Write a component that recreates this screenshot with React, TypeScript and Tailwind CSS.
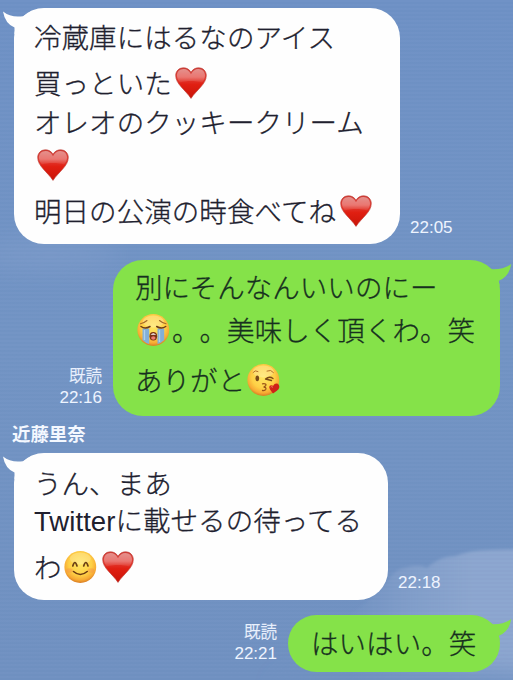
import type { ReactNode } from "react";

const fonts = "font-['Liberation_Sans','Noto_Sans_CJK_JP',sans-serif]";

function Heart() {
  return (
    <svg viewBox="0 0 37 34" className="mb-1 h-[34px] w-[37px] shrink-0">
      <defs>
        <linearGradient id="heart" x1="0" y1="0" x2="0" y2="1">
          <stop offset="0" stopColor="#d0403a" />
          <stop offset="0.3" stopColor="#e2423a" />
          <stop offset="0.55" stopColor="#e01f12" />
          <stop offset="1" stopColor="#c91408" />
        </linearGradient>
        <linearGradient id="heartShine" x1="0" y1="0" x2="0" y2="1">
          <stop offset="0" stopColor="#fff" stopOpacity="0.42" />
          <stop offset="0.6" stopColor="#fff" stopOpacity="0.28" />
          <stop offset="1" stopColor="#fff" stopOpacity="0.06" />
        </linearGradient>
      </defs>
      <path
        d="M19 6.2C21 3 23.5 1.8 26.5 1.8C31.200 1.8 34.3 5.2 34.3 9.6C34.3 18 25 23.5 19 32.4C13 23.5 3.7 18 3.7 9.6C3.7 5.2 6.8 1.8 11.5 1.8C14.5 1.8 17 3 19 6.2Z"
        fill="url(#heart)"
        stroke="#b92f27"
        strokeWidth="0.6"
      />
      <path
        d="M19 8.3C21 4.5 23.5 3 26.3 3C30.300 3 33 5.8 33 9.5C33 12 31.8 14.500 30 16.5C24 14.5 14 14.5 8 16.5C6.2 14.5 5 12 5 9.5C5 5.8 7.7 3 11.7 3C14.5 3 17 4.5 19 8.3Z"
        fill="url(#heartShine)"
      />
    </svg>
  );
}

function Face({ children }: { children: ReactNode }) {
  return (
    <svg viewBox="0 0 37 34" className="mb-1 h-[34px] w-[37px] shrink-0">
      <defs>
        <radialGradient id="face" cx="0.5" cy="0.4" r="0.6">
          <stop offset="0" stopColor="#ffe662" />
          <stop offset="0.6" stopColor="#fed046" />
          <stop offset="0.85" stopColor="#f7aa34" />
          <stop offset="1" stopColor="#d97d22" />
        </radialGradient>
      </defs>
      <circle cx="18.3" cy="17" r="15.9" fill="url(#face)" />
      <ellipse cx="18.3" cy="8.5" rx="10.5" ry="6" fill="#fff" opacity="0.22" />
      {children}
    </svg>
  );
}

function Crying() {
  return (
    <Face>
      <path d="M12 7.5Q9 10 5.5 10.8M24.5 7.5Q27.5 10 31 10.8" stroke="#a4682a" strokeWidth="1.1" fill="none" strokeLinecap="round" />
      <path d="M7.5 15.5H14.2V31Q10.5 30 7.5 27Z" fill="#82afd6" />
      <path d="M22.5 15.5H29.2V27Q26.2 30 22.5 31Z" fill="#82afd6" />
      <path d="M9.5 17V27M24.5 17V29" stroke="#add0ea" strokeWidth="1.3" />
      <path d="M6 13.5Q10 16.5 15 13.5M21.7 13.5Q26.5 16.5 30.7 13.5" stroke="#6d3c17" strokeWidth="1.5" fill="none" strokeLinecap="round" />
      <ellipse cx="18.3" cy="23.3" rx="3.8" ry="4.2" fill="#7a3314" />
      <path d="M15.5 21.8Q18.3 18.5 21.1 21.8Z" fill="#fff" />
      <ellipse cx="18.3" cy="25" rx="2.2" ry="1.7" fill="#ef7d72" />
    </Face>
  );
}

function Kiss() {
  return (
    <Face>
      <path d="M8 9.5Q10 6.5 13 8.5M22 8Q26 6 28.5 9.5" stroke="#b8742b" strokeWidth="1" fill="none" strokeLinecap="round" />
      <ellipse cx="12.3" cy="15.3" rx="1.8" ry="2.9" fill="#7a4a18" />
      <path d="M20.5 16Q24.5 12.8 28 15.5M20.5 16L26.5 17.5" stroke="#7a4a18" strokeWidth="1.3" fill="none" strokeLinecap="round" />
      <path d="M17.5 20.8Q22 20.3 20.6 22.6Q19.7 23.9 18.6 24Q21.5 24.2 20.8 26.2Q20 28 17.5 27.5" stroke="#9a5418" strokeWidth="1.3" fill="none" strokeLinecap="round" />
      <path d="M28 30.5Q24.5 26.5 24.2 24Q24.8 21 28.2 22.8Q30 19.5 32.8 20.8Q35.5 23 33.5 26.3Q31.5 28.5 28 30.5Z" fill="#cf2218" />
      <path d="M25.7 24.2Q26.5 23 28 24.3" stroke="#f08070" strokeWidth="0.9" fill="none" />
    </Face>
  );
}

function Smile() {
  return (
    <Face>
      <ellipse cx="7.5" cy="20.5" rx="3.3" ry="2.3" fill="#f58c4b" opacity="0.4" />
      <ellipse cx="29" cy="20.5" rx="3.3" ry="2.3" fill="#f58c4b" opacity="0.4" />
      <path d="M10.8 16Q12.9 9 15 16M21.7 16Q23.9 9 26 16" stroke="#6b4014" strokeWidth="1.7" fill="none" strokeLinecap="round" />
      <path d="M11.5 21.5Q18.3 27.5 25.2 21.5" stroke="#6b3a12" strokeWidth="1.6" fill="none" strokeLinecap="round" />
    </Face>
  );
}

function Bubble({ mine, className, children }: { mine?: boolean; className: string; children: ReactNode }) {
  return (
    <div
      className={`relative shrink-0 text-[27.5px] font-light leading-none tracking-[0.06px] whitespace-nowrap [text-spacing-trim:space-all] ${
        mine ? "bg-[#85e249] text-[#17301f]" : "bg-[#fefefe] text-[#20202e]"
      } ${className}`}
    >
      {mine ? (
        <svg viewBox="0 0 30 26" className="absolute -right-[12px] top-0 h-[26px] w-[30px]">
          <path d="M0 3L8 9Q21 10 29.3 4Q27 17 16.8 20.8L17.5 26H0Z" fill="#85e249" />
        </svg>
      ) : (
        <svg viewBox="0 0 30 26" className="absolute -left-[12px] top-0 h-[26px] w-[30px]">
          <path d="M30 2.5L21 8.2Q9 10 1 3.5Q3 15.5 12.5 19.5V26H30Z" fill="#fefefe" />
        </svg>
      )}
      {children}
    </div>
  );
}

function Line({ className, children }: { className: string; children: ReactNode }) {
  return <div className={`relative flex items-center [-webkit-text-stroke:0.3px] ${className}`}>{children}</div>;
}

function Meta({ read, time }: { read?: boolean; time: string }) {
  return (
    <div className="flex flex-col items-end text-[17px] leading-[21px] text-[#eef4ff]">
      {read && <span className="text-[16.5px] font-light [-webkit-text-stroke:0.3px]">既読</span>}
      <span>{time}</span>
    </div>
  );
}

function Sky() {
  return (
    <svg viewBox="0 0 513 680" className="absolute inset-0 h-full w-full">
      <defs>
        <linearGradient id="sky" x1="0" y1="0" x2="0" y2="1">
          <stop offset="0" stopColor="#6e91c5" />
          <stop offset="0.5" stopColor="#7294c4" />
          <stop offset="1" stopColor="#7091c1" />
        </linearGradient>
        <linearGradient id="cloud" x1="350" y1="0" x2="470" y2="0" gradientUnits="userSpaceOnUse">
          <stop offset="0" stopColor="#8ba5ce" stopOpacity="0" />
          <stop offset="0.5" stopColor="#8ba5ce" stopOpacity="0.6" />
          <stop offset="1" stopColor="#8da7cf" stopOpacity="0.95" />
        </linearGradient>
        <pattern id="weave" width="40" height="4" patternUnits="userSpaceOnUse">
          <path d="M0 1H40" stroke="#fff" strokeOpacity="0.025" />
          <path d="M0 3H40" stroke="#24508c" strokeOpacity="0.03" />
        </pattern>
        <filter id="soft">
          <feGaussianBlur stdDeviation="1.5" />
        </filter>
        <filter id="haze" x="-50%" y="-100%" width="200%" height="300%">
          <feGaussianBlur stdDeviation="12" />
        </filter>
      </defs>
      <rect width="513" height="680" fill="url(#sky)" />
      <ellipse cx="50" cy="255" rx="70" ry="14" fill="#87a3cf" opacity="0.4" filter="url(#haze)" />
      <path
        d="M330 625Q370 605 388 580Q396 568 408 567Q420 564 427 568Q440 556 455 556Q470 550 490 550L525 549V700H330Z"
        fill="url(#cloud)"
        filter="url(#soft)"
      />
      <ellipse cx="430" cy="690" rx="150" ry="20" fill="#7091c1" filter="url(#haze)" />
      <rect width="513" height="680" fill="url(#weave)" />
    </svg>
  );
}

export default function App() {
  return (
    <div className={`relative h-[680px] w-[513px] overflow-hidden bg-[#7192c3] ${fonts}`}>
      <Sky />
      <div className="relative flex flex-col pt-2">
        <div className="flex items-end gap-2.5 pl-3.5">
          <Bubble className="h-[236px] w-[386px] rounded-[30px] pl-5 pt-[9px]">
            <Line className="h-[44px]">冷蔵庫にはるなのアイス</Line>
            <Line className="h-[48px]">買っといた<Heart /></Line>
            <Line className="h-[29px]">オレオのクッキークリーム</Line>
            <Line className="h-[57px]"><Heart /></Line>
            <Line className="h-[35px] gap-px">明日の公演の時食べてね<Heart /></Line>
          </Bubble>
          <div className="pb-1.5">
            <Meta time="22:05" />
          </div>
        </div>

        <div className="mt-4 flex items-end justify-end gap-[11px] pr-[13px]">
          <div className="pb-2">
            <Meta read time="22:16" />
          </div>
          <Bubble mine className="h-[156px] w-[387px] rounded-[30px] pl-[22px] pt-2">
            <Line className="h-[42px]">別にそんなんいいのにー</Line>
            <Line className="h-[44px]"><Crying />。。美味しく頂くわ。笑</Line>
            <Line className="h-[56px]">ありがと<Kiss /></Line>
          </Bubble>
        </div>

        <div className="mt-2 h-[21px] pl-3 text-[18.4px] font-bold leading-[21px] text-[#f4f8ff]">近藤里奈</div>

        <div className="mt-2 flex items-end gap-2.5 pl-3.5">
          <Bubble className="h-[147px] w-[374px] rounded-[30px] pl-5 pt-3.5">
            <Line className="h-[36px]">うん、まあ</Line>
            <Line className="h-[38px]">
              <span className="[-webkit-text-stroke:0px]">Twitter</span>に載せるの待ってる
            </Line>
            <Line className="h-[55px]">わ<Smile /><Heart /></Line>
          </Bubble>
          <div className="pb-[7px]">
            <Meta time="22:18" />
          </div>
        </div>

        <div className="mt-[15px] flex items-end justify-end gap-[11px] pr-[13px]">
          <div className="pb-2">
            <Meta read time="22:21" />
          </div>
          <Bubble mine className="h-[57px] w-[212px] rounded-[29px] pl-[23px] pt-px">
            <Line className="h-[57px]">はいはい。笑</Line>
          </Bubble>
        </div>
      </div>
    </div>
  );
}
